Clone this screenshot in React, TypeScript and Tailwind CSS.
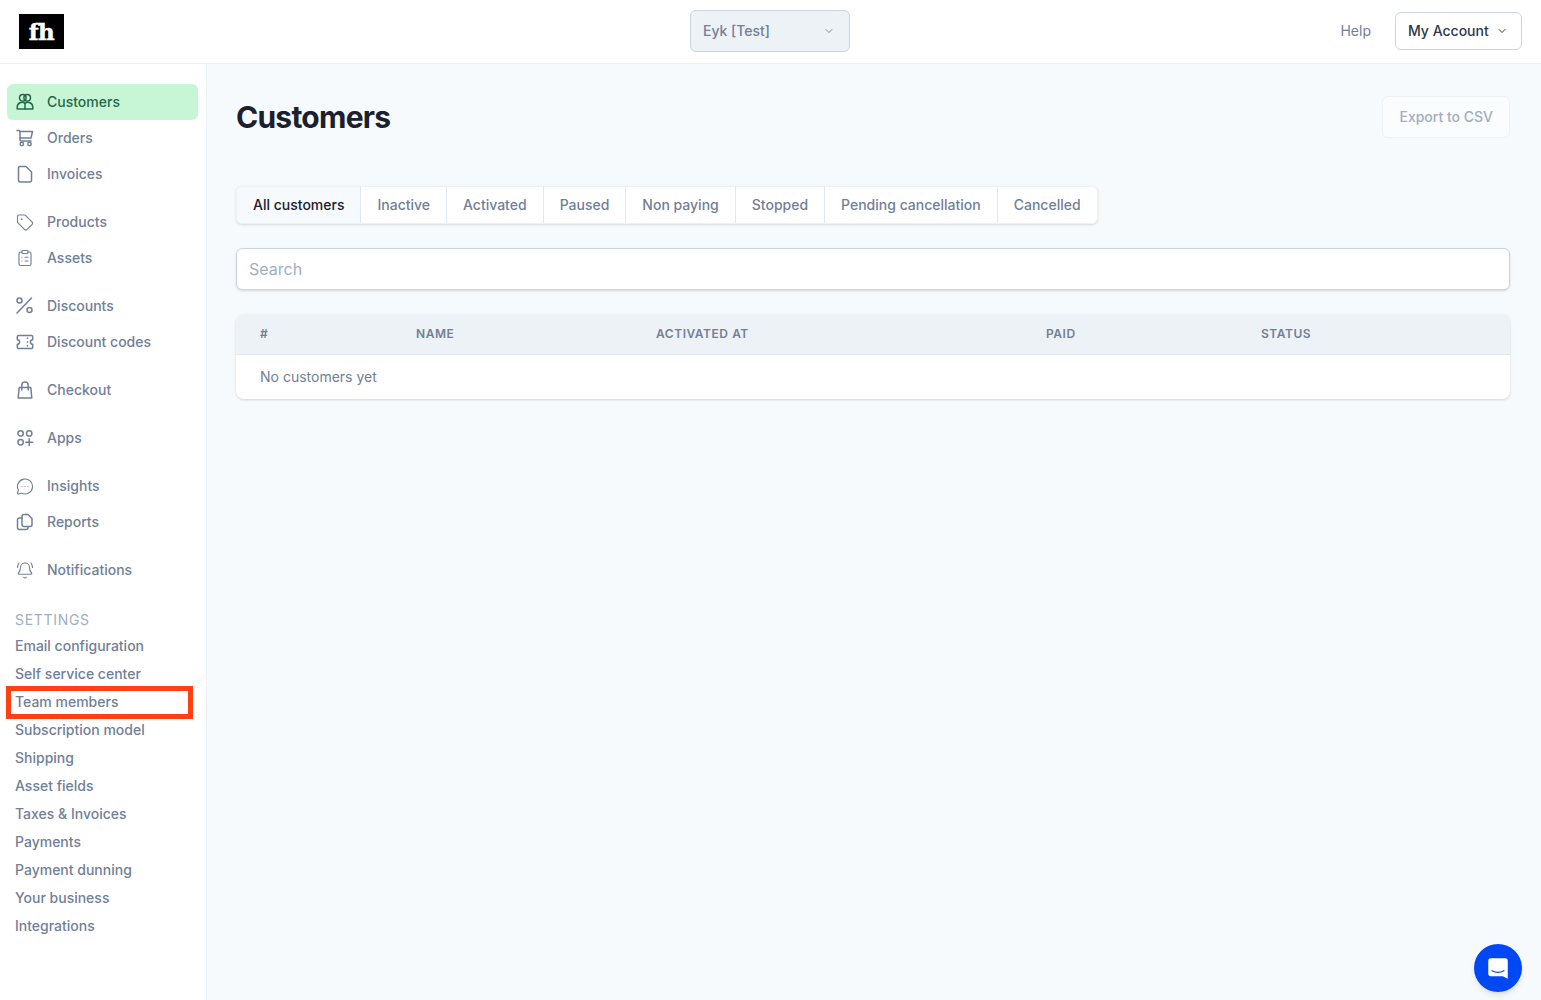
import { ChevronDown, Tag, ClipboardList, MessageCircleMore, BellRing } from "lucide-react";
import type { ReactNode } from "react";

const Svg = ({ children }: { children: ReactNode }) => (
  <svg viewBox="0 0 18 18" fill="none" stroke="currentColor" strokeWidth="1.5" strokeLinejoin="round" strokeLinecap="round" className="w-[18px] h-[18px]">
    {children}
  </svg>
);

const UsersIcon = () => (
  <Svg>
    <circle cx="6.800" cy="4.800" r="3.300" />
    <circle cx="11.200" cy="4.800" r="3.300" />
    <path d="M1.200 16v-2a4.800 4.800 0 0 1 7.800-3.600A4.800 4.800 0 0 1 16.800 14v2z" />
    <path d="M9 10.400V16" />
  </Svg>
);

const CartIcon = () => (
  <Svg>
    <path d="M1 1.500h2a1 1 0 0 1 1 1V11a1 1 0 0 0 1 1h10" />
    <path d="M4 2.500h12.500L15 9H4" />
    <circle cx="5.800" cy="15" r="1.700" />
    <circle cx="13.500" cy="15" r="1.700" />
  </Svg>
);

const FileIcon = () => (
  <Svg>
    <path d="M2.500 3A1.500 1.500 0 0 1 4 1.500h6L15.500 7v8.500A1.500 1.500 0 0 1 14 17H4a1.500 1.500 0 0 1-1.500-1.500z" />
  </Svg>
);

const PercentIcon = () => (
  <Svg>
    <path d="M1 16L15.500 1" />
    <circle cx="3.500" cy="3.500" r="2.500" />
    <circle cx="13.500" cy="13" r="2.500" />
  </Svg>
);

const TicketIcon = () => (
  <Svg>
    <path d="M2.500 2.500h13a1.200 1.200 0 0 1 1.200 1.200v3a2.300 2.300 0 0 0 0 4.600v3a1.200 1.200 0 0 1-1.200 1.200h-13a1.200 1.200 0 0 1-1.200-1.200v-3a2.300 2.300 0 0 0 0-4.600v-3a1.200 1.200 0 0 1 1.200-1.200z" />
    <path d="M11.500 5v.500M11.500 8.700v.500M11.500 12.500v.500" />
  </Svg>
);

const BagIcon = () => (
  <Svg>
    <path d="M3.200 6.500h11.600l1 10.500H2.200z" />
    <path d="M5.800 9V4.200a3.200 3.200 0 0 1 6.400 0V9" />
  </Svg>
);

const AppsIcon = () => (
  <Svg>
    <circle cx="4.600" cy="4.400" r="2.700" />
    <circle cx="13.200" cy="4.400" r="2.700" />
    <circle cx="4.600" cy="13.200" r="2.700" />
    <path d="M13.200 9.800v6.800M9.800 13.200h6.800" />
  </Svg>
);

const ReportsIcon = () => (
  <Svg>
    <path d="M6 3.200A2 2 0 0 1 8 1.500h4l4 4v6a2 2 0 0 1-2 2H8a2 2 0 0 1-2-2z" />
    <path d="M6 5H3.500a2 2 0 0 0-2 2v7.500a2 2 0 0 0 2 2H10a2 2 0 0 0 2-2v-1" />
  </Svg>
);

const nav: { label: string; icon: ReactNode }[][] = [
  [
    { label: "Customers", icon: <UsersIcon /> },
    { label: "Orders", icon: <CartIcon /> },
    { label: "Invoices", icon: <FileIcon /> },
  ],
  [
    { label: "Products", icon: <Tag size={19} strokeWidth={1.5} /> },
    { label: "Assets", icon: <ClipboardList size={20} strokeWidth={1.5} /> },
  ],
  [
    { label: "Discounts", icon: <PercentIcon /> },
    { label: "Discount codes", icon: <TicketIcon /> },
  ],
  [{ label: "Checkout", icon: <BagIcon /> }],
  [{ label: "Apps", icon: <AppsIcon /> }],
  [
    { label: "Insights", icon: <MessageCircleMore size={19} strokeWidth={1.5} /> },
    { label: "Reports", icon: <ReportsIcon /> },
  ],
  [{ label: "Notifications", icon: <BellRing size={19} strokeWidth={1.5} /> }],
];

const settings = [
  "Email configuration",
  "Self service center",
  "Team members",
  "Subscription model",
  "Shipping",
  "Asset fields",
  "Taxes & Invoices",
  "Payments",
  "Payment dunning",
  "Your business",
  "Integrations",
];

const tabs = ["All customers", "Inactive", "Activated", "Paused", "Non paying", "Stopped", "Pending cancellation", "Cancelled"];

const Sidebar = () => (
  <aside className="w-[207px] shrink-0 bg-white border-r border-[#edf2f7] pt-5 pl-[7px] pr-2">
    <div className="flex flex-col gap-3">
      {nav.map((group, i) => (
        <div key={i}>
          {group.map((item) => (
            <div
              key={item.label}
              className={
                item.label === "Customers"
                  ? "h-9 flex items-center gap-[13px] pl-[9px] rounded-md text-sm font-medium bg-[#c6f6d5] text-[#276749]"
                  : "h-9 flex items-center gap-[13px] pl-[9px] rounded-md text-sm font-medium text-[#718096]"
              }
            >
              <span className="w-[18px] h-[18px] flex items-center justify-center">{item.icon}</span>
              {item.label}
            </div>
          ))}
        </div>
      ))}
    </div>
    <div className="mt-[22px] pl-2 text-sm leading-5 tracking-[0.05em] text-[#a0aec0]">SETTINGS</div>
    <div className="mt-[2px]">
      {settings.map((s) => (
        <div key={s} className="relative h-7 flex items-center pl-2 text-sm font-medium text-[#718096]">
          {s}
          {s === "Team members" && (
            <div className="absolute left-[-1px] top-[-2px] w-[187px] h-[33px] border-[5px] border-[#ff4013]" />
          )}
        </div>
      ))}
    </div>
  </aside>
);

export default function App() {
  return (
    <div className="h-[1000px] overflow-hidden flex flex-col bg-[#f7fafc] font-['Inter',sans-serif]">
      <header className="h-16 shrink-0 bg-white border-b border-[#edf2f7] grid grid-cols-[1fr_auto_1fr] items-center pl-[18px] pr-[19px] pb-[2px]">
        <div className="w-[45px] h-[35px] ml-px mt-[2px] bg-black flex items-center justify-center font-['DejaVu_Serif',serif] font-bold text-[23px] leading-none tracking-[-0.02em] text-white [-webkit-text-stroke:0.5px_white]">
          fh
        </div>
        <div className="w-40 h-[42px] flex items-center justify-between pl-[12px] pr-[14px] rounded-md bg-[#edf2f7] border border-[#cbd5e0] text-sm font-medium text-[#718096]">
          Eyk [Test]
          <ChevronDown size={12} strokeWidth={1.75} />
        </div>
        <div className="flex items-center justify-end gap-6">
          <span className="text-sm text-[#718096]">Help</span>
          <div className="w-[127px] h-[38px] flex items-center justify-between pl-3 pr-[13px] rounded-md bg-white border border-[#cbd5e0] text-sm font-medium text-[#2d3748]">
            My Account
            <ChevronDown size={12} strokeWidth={2} />
          </div>
        </div>
      </header>

      <div className="flex flex-1 min-h-0">
        <Sidebar />
        <main className="flex-1 min-w-0 pl-[29px] pr-[31px] pt-8">
          <div className="flex items-start justify-between h-[90px]">
            <h1 className="mt-[3px] text-3xl leading-9 font-bold tracking-tight text-[#1a202c]">Customers</h1>
            <div className="h-[42px] flex items-center px-4 rounded-md bg-[#fafcfd] border border-[#edf2f7] text-sm font-medium text-[#a0aec0]">
              Export to CSV
            </div>
          </div>

          <div className="inline-flex h-[38px] bg-white rounded-md border border-[#edf2f7] shadow-sm overflow-hidden align-top">
            {tabs.map((t, i) => (
              <div
                key={t}
                className={
                  i === 0
                    ? "flex items-center px-4 text-sm font-medium bg-[#f7fafc] text-[#1a202c]"
                    : "flex items-center px-4 text-sm font-medium text-[#718096] border-l border-[#e2e8f0]"
                }
              >
                {t}
              </div>
            ))}
          </div>

          <div className="mt-6 h-[42px] flex items-center px-3 rounded-md bg-white border border-[#cbd5e0] shadow-sm text-base text-[#a0aec0]">
            Search
          </div>

          <div className="mt-6 rounded-lg bg-white shadow-[0_1px_3px_rgba(0,0,0,0.1),0_1px_2px_rgba(0,0,0,0.06)] overflow-hidden">
            <div className="h-[41px] px-6 grid grid-cols-[156px_240px_390px_215px_1fr] items-center bg-[#edf2f7] border-b border-[#e2e8f0] text-xs font-semibold tracking-[0.045em] text-[#718096]">
              <span>#</span>
              <span>NAME</span>
              <span>ACTIVATED AT</span>
              <span>PAID</span>
              <span>STATUS</span>
            </div>
            <div className="h-11 px-6 flex items-center text-sm text-[#718096]">No customers yet</div>
          </div>
        </main>
      </div>

      <div className="fixed right-[19px] bottom-2 w-12 h-12 rounded-full bg-[#0148f5] flex items-center justify-center shadow-md">
        <svg viewBox="0 0 24 24" className="w-[26px] h-[26px]">
          <path d="M5.500 3h13A2.500 2.500 0 0 1 21 5.500V22l-4.500-2.500h-11A2.500 2.500 0 0 1 3 17V5.500A2.500 2.500 0 0 1 5.500 3z" fill="#fff" />
          <path d="M6.500 14.500c3.500 2 7.500 2 11 0" fill="none" stroke="#0148f5" strokeWidth="1.2" strokeLinecap="round" />
        </svg>
      </div>
    </div>
  );
}
